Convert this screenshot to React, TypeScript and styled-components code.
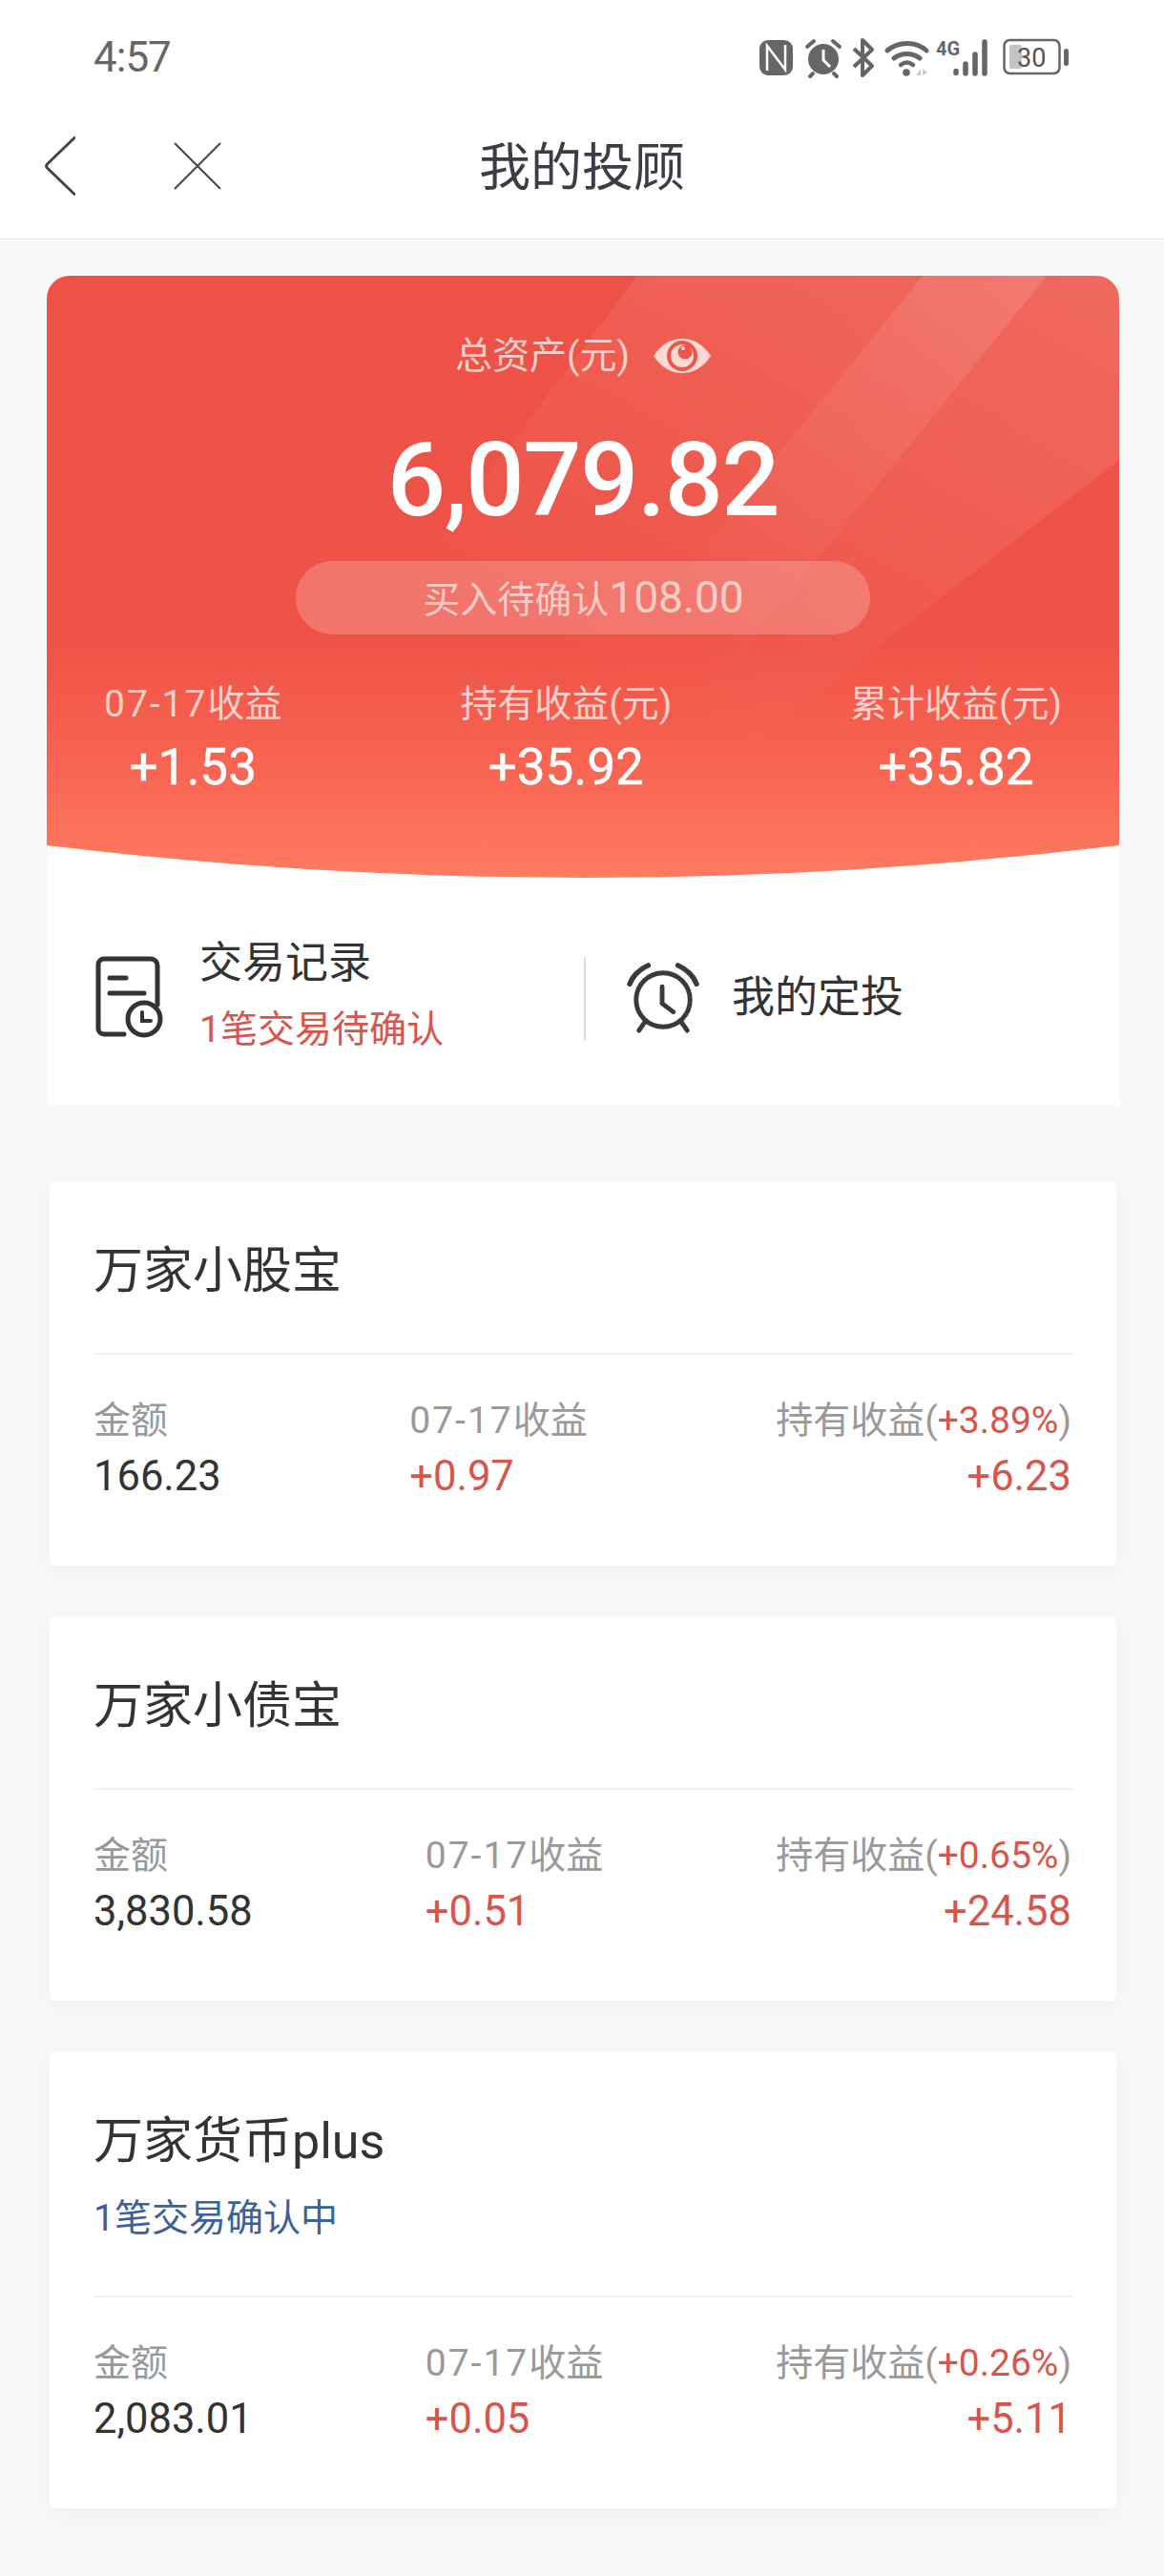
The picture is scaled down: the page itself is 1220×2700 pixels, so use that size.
import React from 'react'
import styled, { createGlobalStyle } from 'styled-components'

const GlobalStyle = createGlobalStyle`
	html, body {
		margin: 0;
		padding: 0;
		background: #f8f8f8;
	}
	* {
		box-sizing: border-box;
	}
	body {
		font-family: Roboto, "Noto Sans CJK SC", sans-serif;
	}
`

const Page = styled.div`
	width: 1220px;
	min-height: 2700px;
	background: #f8f8f8;
	padding-bottom: 64px;
`

const TopArea = styled.header`
	height: 251px;
	background: #fff;
	border-bottom: 1px solid #e2e2e2;
`

const StatusBar = styled.div`
	height: 118px;
	padding: 38px 98px 0 98px;
	display: flex;
	justify-content: space-between;
	align-items: flex-start;
`

const Clock = styled.div`
	font-size: 44px;
	line-height: 44px;
	letter-spacing: -1px;
	color: #666;
`

const StatusIcons = styled.div`
	display: block;
	margin-top: 2px;
`

const NavBar = styled.div`
	display: grid;
	grid-template-columns: 1fr auto 1fr;
	align-items: center;
	height: 112px;
`

const NavIcons = styled.div`
	display: flex;
	align-items: center;
	gap: 103px;
	padding-left: 47px;
`

const NavTitle = styled.h1`
	margin: 0;
	font-size: 54px;
	line-height: 70px;
	font-weight: 400;
	color: #3c3c46;
	margin-top: 5px;
`

const Summary = styled.section`
	margin: 38px 47px 0 49px;
	background: #fff;
	border-radius: 24px 24px 0 0;
	overflow: hidden;
	height: 870px;
`

const Hero = styled.div`
	position: relative;
	height: 637px;
	padding: 61px 60px 0;
	background: linear-gradient(180deg, #ee5145 0%, #ef5347 60%, #f76250 78%, #ff7c62 100%);
	color: #fff;
	text-align: center;
`

const Stripes = styled.svg`
	position: absolute;
	left: 0;
	top: 0;
`

const Curve = styled.svg`
	position: absolute;
	left: 0;
	bottom: 0;
	display: block;
`

const HeroInner = styled.div`
	position: relative;
`

const TotalLabel = styled.div`
	display: flex;
	justify-content: center;
	align-items: center;
	gap: 25px;
	font-size: 39px;
	line-height: 46px;
	color: rgba(255, 255, 255, 0.72);
`

const TotalAmount = styled.div`
	margin-top: 47px;
	font-size: 108px;
	line-height: 120px;
	letter-spacing: -1.5px;
	font-weight: 500;
`

const Pending = styled.div`
	width: 602px;
	height: 77px;
	margin: 25px auto 0;
	border-radius: 38px;
	background: rgba(255, 255, 255, 0.2);
	color: rgba(255, 255, 255, 0.65);
	font-size: 39px;
	line-height: 77px;
	padding-left: 1px;
`

const PendingNumber = styled.span`
	font-size: 46px;
`

const HeroStats = styled.div`
	display: flex;
	justify-content: space-between;
	margin-top: 50px;
`

const HeroStat = styled.div`
	display: flex;
	flex-direction: column;
	align-items: center;
`

const HeroStatLabel = styled.div`
	font-size: 39px;
	line-height: 46px;
	color: rgba(255, 255, 255, 0.72);
`

const HeroStatValue = styled.div`
	margin-top: 13px;
	font-size: 53px;
	line-height: 60px;
	font-weight: 400;
	-webkit-text-stroke: 0.4px #fff;
`

const DateText = styled.span`
	letter-spacing: 2px;
`

const Actions = styled.div`
	display: flex;
	align-items: center;
	height: 88px;
	margin-top: 77px;
`

const Action = styled.div<{ $divided?: boolean }>`
	display: flex;
	align-items: center;
	height: 100%;
	${(props) =>
		props.$divided
			? `
		flex: 1;
		gap: 34px;
		padding: 0 0 3px 43px;
		border-left: 2px solid #dcdcdc;
	`
			: `
		flex: 0 0 563px;
		gap: 37px;
		padding-left: 51px;
	`}
`

const ActionText = styled.div`
	display: flex;
	flex-direction: column;
	gap: 19px;
	margin-top: -6px;
`

const ActionTitle = styled.div`
	font-size: 45px;
	line-height: 50px;
	color: #333;
`

const ActionNote = styled.div`
	font-size: 39px;
	line-height: 50px;
	color: #d9554b;
`

const RecordSvg = styled.svg`
	margin-top: -5px;
`

const Funds = styled.div`
	display: flex;
	flex-direction: column;
	gap: 53px;
	margin: 79px 50px 0 52px;
`

const FundCard = styled.article`
	background: #fff;
	border-radius: 6px;
	box-shadow: 0 6px 24px rgba(0, 0, 0, 0.04);
	padding: 60px 47px 68px 46px;
`

const FundName = styled.h2`
	margin: 0;
	font-size: 52px;
	line-height: 70px;
	font-weight: 400;
	color: #333;
`

const FundNote = styled.div`
	margin-top: 22px;
	margin-bottom: 58px;
	font-size: 39px;
	line-height: 46px;
	color: #3b6199;
`

const Rule = styled.hr`
	margin: 50px 0 0;
	border: 0;
	height: 2px;
	background: #f1f1f1;
`

const FundStats = styled.div`
	display: flex;
	justify-content: space-between;
	margin-top: 46px;
`

const FundStat = styled.div<{ $end?: boolean }>`
	display: flex;
	flex-direction: column;
	align-items: ${(props) => (props.$end ? 'flex-end' : 'flex-start')};
`

const FundLabel = styled.div`
	font-size: 39px;
	line-height: 46px;
	color: #999;
`

const FundValue = styled.div<{ $up?: boolean }>`
	margin-top: 11px;
	font-size: 43.5px;
	line-height: 50px;
	color: ${(props) => (props.$up ? '#d9554b' : '#333')};
`

const Rate = styled.span`
	color: #d9554b;
`

const BackIcon = () => (
	<svg width="32" height="62" viewBox="0 0 32 62" fill="none">
		<path d="M31 1.5 2.5 29a3 3 0 0 0 0 4L31 60.5" stroke="#44444e" strokeWidth="3" strokeLinecap="round" />
	</svg>
)

const CloseIcon = () => (
	<svg width="50" height="50" viewBox="0 0 50 50" fill="none">
		<path d="M1 1 49 49M49 1 1 49" stroke="#44444e" strokeWidth="2" />
	</svg>
)

const EyeIcon = () => (
	<svg width="60" height="36" viewBox="0 0 60 36">
		<path d="M0 18C8 6 18 0 30 0s22 6 30 18c-8 12-18 18-30 18S8 30 0 18Z" fill="#fcd9d5" />
		<circle cx="30" cy="18" r="16" fill="#ee5447" />
		<circle cx="30" cy="18" r="12" fill="#fcd9d5" />
		<circle cx="33" cy="14" r="7.5" fill="#ee5447" />
		<circle cx="31" cy="10" r="2" fill="#fcd9d5" />
	</svg>
)

const StatusGlyphs = () => (
	<svg width="326" height="44" viewBox="0 0 326 44" fill="none">
		{/* nfc */}
		<rect x="0" y="2" width="35" height="37" rx="9" fill="#666" />
		<path d="M8 34V8L27 33V7" stroke="#fff" strokeWidth="2.5" fill="none" />
		{/* alarm */}
		<circle cx="67" cy="22" r="16" fill="#666" />
		<path d="M67 12v11l7 7" stroke="#fff" strokeWidth="3" fill="none" />
		<path d="M50 9l7-6M84 9l-7-6M56 37l-3 3M78 37l3 3" stroke="#666" strokeWidth="4" strokeLinecap="round" />
		{/* bluetooth */}
		<path d="M99 11 118 29 108 39V2l10 10-19 18" stroke="#666" strokeWidth="4" strokeLinejoin="round" />
		{/* wifi */}
		<path d="M134 13c12-10 30-10 41 0M141 21c8-6 19-6 27 0" stroke="#666" strokeWidth="5" strokeLinecap="round" />
		<path d="M148 28c4-3 9-3 13 0" stroke="#666" strokeWidth="4.5" strokeLinecap="round" />
		<circle cx="154" cy="36" r="3.8" fill="#666" />
		<path d="M164 39l5-7v7h-5ZM171 32l5 4-5 3v-7Z" fill="#ccc" />
		{/* signal */}
		<text x="185" y="18" fontFamily="Roboto, sans-serif" fontSize="20" fontWeight="700" fill="#666">
			4G
		</text>
		<path
			d="M209 34.5v2M219 27v10M229 17v20M239 4v33"
			stroke="#666"
			strokeWidth="5.5"
			strokeLinecap="round"
			transform="translate(-3 0)"
		/>
		{/* battery */}
		<rect x="256.5" y="2" width="58" height="35" rx="6" stroke="#666" strokeWidth="2.5" />
		<rect x="262" y="7" width="13" height="25" rx="2" fill="#c4c4c4" />
		<text x="270" y="30" fontFamily="Roboto, sans-serif" fontSize="27" fill="#555">
			30
		</text>
		<rect x="319" y="11" width="5" height="18" rx="2.5" fill="#666" />
	</svg>
)

const RecordIcon = () => (
	<RecordSvg width="72" height="86" viewBox="0 0 72 86" fill="none" stroke="#333" strokeWidth="5" strokeLinecap="round">
		<path d="M30 82H9a6 6 0 0 1-6-6V9a6 6 0 0 1 6-6h49a7 7 0 0 1 7 7v41" />
		<path d="M15 23h17M15 39h36" />
		<circle cx="51" cy="66" r="17" />
		<path d="M49 59v9h9" strokeWidth="4" />
	</RecordSvg>
)

const AlarmIcon = () => (
	<svg width="76" height="78" viewBox="0 0 78 78" fill="none" stroke="#3a3a3a" strokeWidth="5" strokeLinecap="round">
		<circle cx="39" cy="41" r="29" />
		<path d="M38 27v18l12 9" />
		<path d="M3 24C7 14 14 8 23 4M75 24c-4-10-11-16-20-20" strokeWidth="5.5" />
		<path d="M20 64l-7 10M58 64l7 10" />
	</svg>
)

type Stat = {
	label: React.ReactNode,
	value: string,
}

type Fund = {
	name: string,
	note?: string,
	amount: string,
	daily: string,
	rate: string,
	holding: string,
}

const heroStats: Stat[] = [
	{ label: <><DateText>07-17</DateText>收益</>, value: '+1.53' },
	{ label: '持有收益(元)', value: '+35.92' },
	{ label: '累计收益(元)', value: '+35.82' },
]

const funds: Fund[] = [
	{ name: '万家小股宝', amount: '166.23', daily: '+0.97', rate: '+3.89%', holding: '+6.23' },
	{ name: '万家小债宝', amount: '3,830.58', daily: '+0.51', rate: '+0.65%', holding: '+24.58' },
	{ name: '万家货币plus', note: '1笔交易确认中', amount: '2,083.01', daily: '+0.05', rate: '+0.26%', holding: '+5.11' },
]

export default function App() {
	return (
		<Page>
			<GlobalStyle />
			<TopArea>
				<StatusBar>
					<Clock>4:57</Clock>
					<StatusIcons>
						<StatusGlyphs />
					</StatusIcons>
				</StatusBar>
				<NavBar>
					<NavIcons>
						<BackIcon />
						<CloseIcon />
					</NavIcons>
					<NavTitle>我的投顾</NavTitle>
				</NavBar>
			</TopArea>

			<Summary>
				<Hero>
					<Stripes width="1124" height="637" viewBox="0 0 1124 637" fill="none">
						<defs>
							<linearGradient id="bandA" x1="1" y1="0" x2="0.2" y2="0.85">
								<stop offset="0" stopColor="#fff" stopOpacity="0.14" />
								<stop offset="0.55" stopColor="#fff" stopOpacity="0.05" />
								<stop offset="0.9" stopColor="#fff" stopOpacity="0" />
							</linearGradient>
							<linearGradient id="bandB" x1="1" y1="0" x2="0" y2="1">
								<stop offset="0" stopColor="#fff" stopOpacity="0.12" />
								<stop offset="0.75" stopColor="#fff" stopOpacity="0" />
							</linearGradient>
						</defs>
						<path d="M619 0H1124V193L740 490H250Z" fill="url(#bandA)" />
						<path d="M918 0H1048L660 480H530Z" fill="url(#bandB)" />
					</Stripes>
					<HeroInner>
						<TotalLabel>
							<span>总资产(元)</span>
							<EyeIcon />
						</TotalLabel>
						<TotalAmount>6,079.82</TotalAmount>
						<Pending>
							买入待确认<PendingNumber>108.00</PendingNumber>
						</Pending>
						<HeroStats>
							{heroStats.map((s, i) => (
								<HeroStat key={i}>
									<HeroStatLabel>{s.label}</HeroStatLabel>
									<HeroStatValue>{s.value}</HeroStatValue>
								</HeroStat>
							))}
						</HeroStats>
					</HeroInner>
					<Curve width="1124" height="40" viewBox="0 0 1124 40">
						<path d="M0 0Q562 68 1124 0V40H0Z" fill="#fff" />
					</Curve>
				</Hero>
				<Actions>
					<Action>
						<RecordIcon />
						<ActionText>
							<ActionTitle>交易记录</ActionTitle>
							<ActionNote>1笔交易待确认</ActionNote>
						</ActionText>
					</Action>
					<Action $divided>
						<AlarmIcon />
						<ActionTitle>我的定投</ActionTitle>
					</Action>
				</Actions>
			</Summary>

			<Funds>
				{funds.map((f) => (
					<FundCard key={f.name}>
						<FundName>{f.name}</FundName>
						{f.note && <FundNote>{f.note}</FundNote>}
						<Rule />
						<FundStats>
							<FundStat>
								<FundLabel>金额</FundLabel>
								<FundValue>{f.amount}</FundValue>
							</FundStat>
							<FundStat>
								<FundLabel>
									<DateText>07-17</DateText>收益
								</FundLabel>
								<FundValue $up>{f.daily}</FundValue>
							</FundStat>
							<FundStat $end>
								<FundLabel>
									持有收益(<Rate>{f.rate}</Rate>)
								</FundLabel>
								<FundValue $up>{f.holding}</FundValue>
							</FundStat>
						</FundStats>
					</FundCard>
				))}
			</Funds>
		</Page>
	)
}
